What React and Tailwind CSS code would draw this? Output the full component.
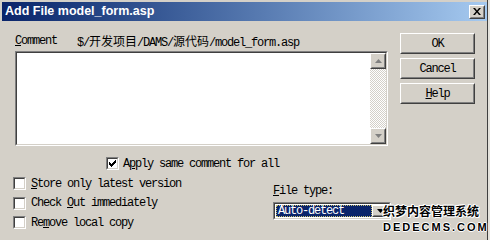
import React from 'react';

const mono = "font-['Liberation_Mono',monospace] text-[12px] tracking-[-1.2px] leading-[12px] text-black";
const cjk = "font-['Noto_Sans_CJK_SC',sans-serif] text-[12px] tracking-normal leading-[12px]";

const Raised = ({ className = '', children }) => (
    <div className={`border border-t-white border-l-white border-b-[#404040] border-r-[#404040] ${className}`}>
        <div className="h-full w-full border border-t-[#d4d0c8] border-l-[#d4d0c8] border-b-[#808080] border-r-[#808080] bg-[#d4d0c8] flex items-center justify-center">
            {children}
        </div>
    </div>
);

const Sunken = ({ className = '', inner = '', children }) => (
    <div className={`border border-t-[#808080] border-l-[#808080] border-b-white border-r-white ${className}`}>
        <div className={`h-full w-full border border-t-[#404040] border-l-[#404040] border-b-[#d4d0c8] border-r-[#d4d0c8] ${inner}`}>
            {children}
        </div>
    </div>
);

const Check = ({ checked }) => (
    <Sunken className="w-[13px] h-[13px] shrink-0" inner="bg-white relative">
        {checked && (
            <svg width="7" height="7" viewBox="0 0 7 7" className="absolute left-[1px] top-[1px]">
                <path d="M0 2h1v1h1v1h1V3h1V2h1V1h1V0h1v3H6v1H5v1H4v1H3v1H2V6H1V5H0z" fill="#000" />
            </svg>
        )}
    </Sunken>
);

const Arrow = ({ down, color = '#808080' }) => (
    <svg width="7" height="4" viewBox="0 0 7 4">
        <path d={down ? 'M0 0h7L3.5 4z' : 'M3.5 0L7 4H0z'} fill={color} />
    </svg>
);

const CheckRow = ({ before, u, after }) => (
    <div className="flex items-center gap-[5px] h-[13px]">
        <Check />
        <span className={mono}>
            {before}<span className="underline">{u}</span>{after}
        </span>
    </div>
);

const App = () => {
    return (
        <div className="w-[490px] h-[240px] bg-[#e4e2dc] overflow-hidden">
            <div className="relative w-[488px] h-[240px] bg-[#d4d0c8] border-r border-[#404040] pl-[2px] pt-[2px]">
                {/* Title bar */}
                <div className="h-[19px] bg-linear-to-r from-[#0a246a] to-[#a6caf0] flex items-center justify-between pl-[3px] pr-[2px]">
                    <span className="font-['Liberation_Sans',Arial,sans-serif] font-bold text-[12.5px] text-white leading-none">
                        Add File model_form.asp
                    </span>
                    <Raised className="w-[16px] h-[14px]">
                        <svg width="8" height="7" viewBox="0 0 8 7">
                            <path d="M0 0h2l2 2.5L6 0h2L5 3.5 8 7H6L4 4.5 2 7H0l3-3.5z" fill="#000" />
                        </svg>
                    </Raised>
                </div>

                {/* Comment + buttons */}
                <div className="flex pl-[13px]">
                    <div className="w-[373px]">
                        <div className={`mt-[14px] h-[12px] flex ${mono}`}>
                            <span><span className="underline">C</span>omment</span>
                            <span className="ml-[20px]">
                                $/<span className={cjk}>开发项目</span>/DAMS/<span className={cjk}>源代码</span>/model_form.asp
                            </span>
                        </div>
                        <Sunken className="mt-[4px] h-[95px] w-full" inner="bg-white flex justify-end">
                            <div className="w-[16px] h-full flex flex-col">
                                <Raised className="w-[16px] h-[16px]">
                                    <Arrow />
                                </Raised>
                                <div className="flex-1 bg-[repeating-conic-gradient(#d4d0c8_0%_25%,#ffffff_0%_50%)] bg-[length:2px_2px]" />
                                <Raised className="w-[16px] h-[16px]">
                                    <Arrow down />
                                </Raised>
                            </div>
                        </Sunken>
                    </div>
                    <div className="ml-[12px] mt-[12px] w-[75px] flex flex-col gap-[4px]">
                        <Raised className="h-[21px]"><span className={mono}>OK</span></Raised>
                        <Raised className="h-[21px]"><span className={mono}>Cancel</span></Raised>
                        <Raised className="h-[21px]">
                            <span className={mono}><span className="underline">H</span>elp</span>
                        </Raised>
                    </div>
                </div>

                {/* Apply row */}
                <div className="mt-[11px] pl-[104px] flex items-center gap-[4px] h-[13px]">
                    <Check checked />
                    <span className={mono}>A<span className="underline">p</span>ply same comment for all</span>
                </div>

                {/* Options + file type */}
                <div className="flex mt-[7px]">
                    <div className="w-[271px] pl-[11px] flex flex-col gap-[6.5px]">
                        <CheckRow before="" u="S" after="tore only latest version" />
                        <CheckRow before="Check " u="O" after="ut immediately" />
                        <CheckRow before="Re" u="m" after="ove local copy" />
                    </div>
                    <div className="mt-[8px]">
                        <div className={`h-[12px] ${mono}`}>
                            <span className="underline">F</span>ile type:
                        </div>
                        <Sunken className="mt-[5px] w-[118px] h-[18px]" inner="bg-white flex p-[1px]">
                            <div className="flex-1 bg-[#0a246a] border border-dotted border-[#c8c070] flex items-center pl-[1px]">
                                <span className={`${mono} text-white`}>Auto-detect</span>
                            </div>
                            <Raised className="w-[16px] h-full">
                                <Arrow down color="#000" />
                            </Raised>
                        </Sunken>
                    </div>
                </div>

                {/* Watermark overlay */}
                <div className="absolute left-[383px] top-[204px] flex flex-col items-start">
                    <span className="font-['Noto_Sans_CJK_SC',sans-serif] font-bold text-[12px] leading-[14px] text-black [text-shadow:1px_0_0_#fff,-1px_0_0_#fff,0_1px_0_#fff,0_-1px_0_#fff,1px_1px_0_#fff,-1px_-1px_0_#fff]">
                        织梦内容管理系统
                    </span>
                    <span className="mt-[3px] font-['Liberation_Sans',Arial,sans-serif] font-bold text-[11px] leading-[12px] tracking-[2px] text-black [text-shadow:1px_0_0_#fff,-1px_0_0_#fff,0_1px_0_#fff,0_-1px_0_#fff]">
                        DEDECMS.COM
                    </span>
                </div>
            </div>
        </div>
    );
};

export default App;
